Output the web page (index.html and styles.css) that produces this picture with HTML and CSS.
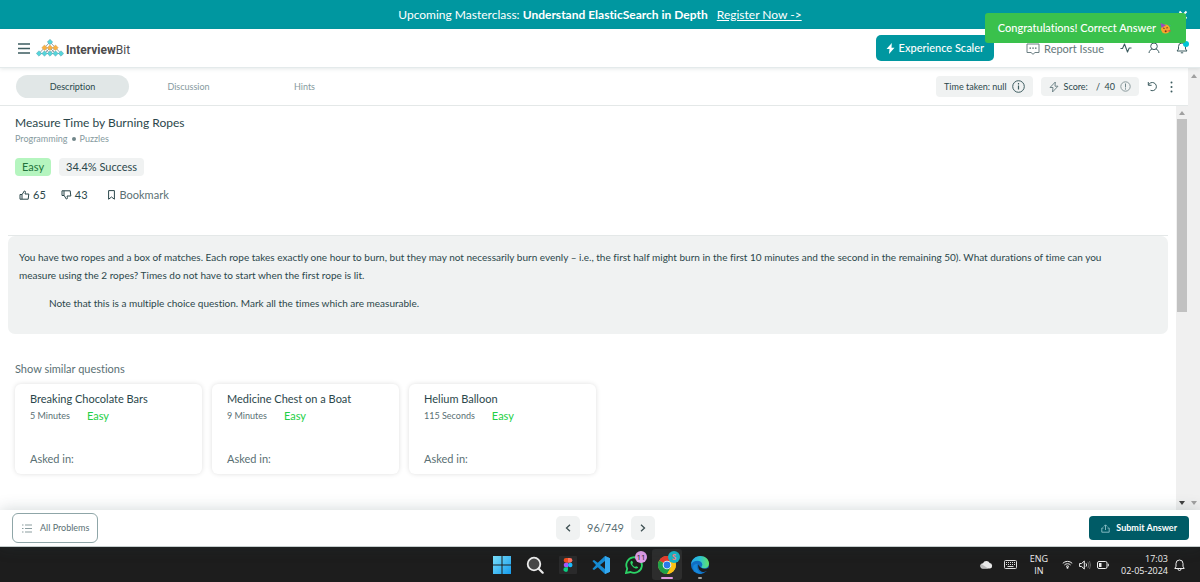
FILE: index.html
```html
<!DOCTYPE html>
<html lang="en">
<head>
<meta charset="utf-8">
<title>Measure Time by Burning Ropes - InterviewBit</title>
<link rel="stylesheet" href="styles.css">
</head>
<body>
<div class="banner">
  <p class="banner-text">Upcoming Masterclass: <strong>Understand ElasticSearch in Depth</strong> <a class="banner-link" href="#">Register Now -&gt;</a></p>
  <button class="banner-close" aria-label="Close banner"><svg width="10" height="10" viewBox="0 0 10 10"><path d="M1.5 1.5l7 7M8.500 1.500l-7 7" stroke="#fff" stroke-width="1.800"/></svg></button>
</div>

<header class="header">
  <button class="icon-button menu" aria-label="Menu"><svg width="12" height="11" viewBox="0 0 12 11"><path d="M0 1h12M0 5.500h12M0 10h12" stroke="#3d5c60" stroke-width="1.300"/></svg></button>
  <a class="logo" href="#">
    <svg width="28" height="18" viewBox="0 0 28 18">
      <path d="M14 3L3 14.500M14 3l11 11.500M8.500 9l5.500 5.500M19.500 9L14 14.500M14 9l-5.500 5.500M14 9l5.500 5.500M8.500 9h11M3 14.500h22" stroke="#7b8a90" stroke-width=".8" fill="none"/>
      <g fill="#55d5db" stroke="#5aa5b0" stroke-width=".5"><path d="M14 .3l2.700 2.700L14 5.700 11.300 3zM3 11.800l2.700 2.700L3 17.200.3 14.500zM8.500 11.800l2.700 2.700-2.700 2.700-2.700-2.700zM14 11.800l2.700 2.700-2.700 2.700-2.700-2.700zM19.500 11.800l2.700 2.700-2.700 2.700-2.700-2.700zM25 11.800l2.700 2.700-2.700 2.700-2.700-2.700z"/></g>
      <path d="M8.500 6l2.700 2.700-2.700 2.700-2.700-2.700zM14 6l2.700 2.700-2.700 2.700-2.700-2.700zM19.500 6l2.700 2.700-2.700 2.700-2.700-2.700z" fill="#fbb040" stroke="#c69c5b" stroke-width=".5"/>
    </svg>
    <span class="logo-name"><b>Interview</b>Bit</span>
  </a>
  <button class="scaler"><svg width="9" height="11" viewBox="0 0 9 11"><path d="M5.800 0L.5 6h3L3 11l5.500-6.300h-3z" fill="#fff"/></svg>Experience Scaler</button>
  <button class="icon-button report"><svg width="14" height="12" viewBox="0 0 14 12"><path d="M1 1h12v8.500H9l-2 1.800-2-1.800H1z" fill="none" stroke="#6c7f83"/><path d="M3.500 5.200h1.500M6.300 5.200h1.500M9 5.200h1.500" stroke="#506669" stroke-width="1.300"/></svg>Report Issue</button>
  <button class="icon-button" aria-label="Activity"><svg width="12" height="12" viewBox="0 0 12 12"><path d="M.5 6.500h2L4.500 2l3 8 1.700-4h2.300" fill="none" stroke="#3d5c60" stroke-width="1.100" stroke-linejoin="round"/></svg></button>
  <button class="icon-button" aria-label="Profile"><svg width="12" height="12" viewBox="0 0 12 12"><circle cx="6" cy="4.300" r="3.300" fill="none" stroke="#3d5c60"/><path d="M1 11c.3-2.400 1.600-3.600 3.400-4M11 11c-.3-2.400-1.600-3.600-3.400-4" fill="none" stroke="#3d5c60"/></svg></button>
  <button class="icon-button bell" aria-label="Notifications"><svg width="12" height="12" viewBox="0 0 12 12"><path d="M1 9h10L9.500 7V4.500a3.500 3.500 0 0 0-7 0V7zM4.800 10.800h2.400" fill="none" stroke="#3d5c60"/></svg><span class="bell-dot"></span></button>
</header>

<div class="toast" role="status">Congratulations! Correct Answer
  <svg width="11" height="11" viewBox="0 0 11 11"><circle cx="5.500" cy="6" r="4.500" fill="#f7a52c"/><path d="M.5 0l5.500 2.200L1.500 5z" fill="#9a4cc0"/><path d="M3 5.500q.8-.8 1.600 0M6.300 5q.8-.8 1.600 0" stroke="#6b3b1d" fill="none"/><circle cx="5.700" cy="8.300" r="1" fill="#7d3620"/><path d="M6.500 8l4-1.200v2z" fill="#e05046"/><path d="M9 1.500l1 1" stroke="#4d8be0"/></svg>
</div>

<div class="workspace">
  <main class="main">
    <div class="toolbar">
      <nav class="tabs">
        <a class="tab tab-active" href="#">Description</a>
        <a class="tab" href="#">Discussion</a>
        <a class="tab" href="#">Hints</a>
      </nav>
      <div class="pill">Time taken: null <svg width="13" height="13" viewBox="0 0 13 13"><circle cx="6.500" cy="6.500" r="5.800" fill="none" stroke="#3d5c60"/><path d="M6.500 5.500v4M6.500 3v1.400" stroke="#3d5c60" stroke-width="1.200"/></svg></div>
      <div class="pill pill-score"><svg width="10" height="12" viewBox="0 0 10 12"><path d="M6.300 1L1 6.500h3L3.500 11 9 5.200H6z" fill="none" stroke="#71868a" stroke-linejoin="round"/></svg>Score:<span class="score-value">/ &nbsp;40</span><svg width="11" height="11" viewBox="0 0 11 11"><circle cx="5.500" cy="5.500" r="4.700" fill="none" stroke="#8b9a9d"/><path d="M5.500 2.500v4M5.500 7.300v1.300" stroke="#71868a"/></svg></div>
      <button class="icon-button" aria-label="Reset"><svg width="11" height="11" viewBox="0 0 11 11"><path d="M1.300 1v3.300h3.300M1.500 4A4.100 4.100 0 1 1 3.500 9.300" fill="none" stroke="#3d5c60"/></svg></button>
      <button class="icon-button more" aria-label="More"><svg width="3" height="12" viewBox="0 0 3 12"><g fill="#3d5c60"><circle cx="1.500" cy="1.500" r="1"/><circle cx="1.500" cy="6" r="1"/><circle cx="1.500" cy="10.500" r="1"/></g></svg></button>
    </div>

    <div class="pane">
      <article class="content">
        <section class="intro">
          <h1 class="title">Measure Time by Burning Ropes</h1>
          <p class="crumbs">Programming <span class="dot"></span> Puzzles</p>
          <div class="chips"><span class="chip chip-easy">Easy</span><span class="chip">34.4% Success</span></div>
          <div class="votes">
            <button class="vote"><svg width="11" height="10" viewBox="0 0 11 10"><path d="M1 4.500h2v4.700H1zM3 4.700L5.300 1c1 0 1.400.6 1.100 1.500L6 4h3.800L9.200 9.200H3" fill="none" stroke="#2b474b" stroke-linejoin="round"/></svg>65</button>
            <button class="vote"><svg width="11" height="10" viewBox="0 0 11 10"><path d="M1 5.500h2V.8H1zM3 5.300L5.300 9c1 0 1.400-.6 1.100-1.500L6 6h3.800L9.200.8H3" fill="none" stroke="#2b474b" stroke-linejoin="round"/></svg>43</button>
            <button class="vote bookmark"><svg width="7" height="10" viewBox="0 0 7 10"><path d="M.6.6h5.800v8.600L3.500 7 .6 9.200z" fill="none" stroke="#2b474b"/></svg>Bookmark</button>
          </div>
        </section>

        <section class="statement">
          <p>You have two ropes and a box of matches. Each rope takes exactly one hour to burn, but they may not necessarily burn evenly – i.e., the first half might burn in the first 10 minutes and the second in the remaining 50). What durations of time can you<br>measure using the 2 ropes? Times do not have to start when the first rope is lit.</p>
          <p class="note">Note that this is a multiple choice question. Mark all the times which are measurable.</p>
        </section>

        <section class="similar">
          <h2 class="similar-title">Show similar questions</h2>
          <div class="cards">
            <a class="card" href="#"><span class="card-title">Breaking Chocolate Bars</span><span class="card-meta">5 Minutes <span class="level">Easy</span></span><span class="asked">Asked in:</span></a>
            <a class="card" href="#"><span class="card-title">Medicine Chest on a Boat</span><span class="card-meta">9 Minutes <span class="level">Easy</span></span><span class="asked">Asked in:</span></a>
            <a class="card" href="#"><span class="card-title">Helium Balloon</span><span class="card-meta">115 Seconds <span class="level">Easy</span></span><span class="asked">Asked in:</span></a>
          </div>
        </section>
      </article>
      <div class="scrollbar"><span class="arrow arrow-up"></span><span class="thumb"></span><span class="arrow arrow-down arrow-dark"></span></div>
    </div>
  </main>
  <div class="scrollbar scrollbar-outer"><span class="arrow arrow-up"></span><span class="arrow arrow-down"></span></div>
</div>

<footer class="footer">
  <button class="all"><svg width="10" height="9" viewBox="0 0 10 9"><path d="M0 1h1.500M3 1h7M0 4.500h1.500M3 4.500h7M0 8h1.500M3 8h7" stroke="#8b9da0" stroke-width="1.200"/></svg>All Problems</button>
  <div class="pager">
    <button class="step" aria-label="Previous"><svg width="6" height="8" viewBox="0 0 6 8"><path d="M5 .8L1.500 4 5 7.200" fill="none" stroke="#3d4f52" stroke-width="1.300"/></svg></button>
    <span>96/749</span>
    <button class="step" aria-label="Next"><svg width="6" height="8" viewBox="0 0 6 8"><path d="M1 .8L4.500 4 1 7.200" fill="none" stroke="#3d4f52" stroke-width="1.300"/></svg></button>
  </div>
  <button class="submit"><svg width="9" height="9" viewBox="0 0 9 9"><path d="M2.500 4H.8v4.200h7.400V4H6.500M4.500 6V1M2.800 2.500L4.500.8l1.700 1.700" fill="none" stroke="#8fc3c9" stroke-width=".9"/></svg>Submit Answer</button>
</footer>

<div class="taskbar">
  <div class="apps">
    <button class="app" aria-label="Start"><svg width="18" height="18" viewBox="0 0 18 18"><defs><linearGradient id="win" x2="1" y2="1"><stop stop-color="#7be0fb"/><stop offset="1" stop-color="#159bed"/></linearGradient></defs><path d="M0 0h8.500v8.500H0zM9.500 0H18v8.500H9.500zM0 9.500h8.500V18H0zM9.500 9.500H18V18H9.500z" fill="url(#win)"/></svg></button>
    <button class="app" aria-label="Search"><svg width="18" height="18" viewBox="0 0 18 18"><circle cx="8" cy="8" r="6.300" fill="#474747" stroke="#ececec" stroke-width="1.800"/><path d="M12.700 12.700l4 4" stroke="#ececec" stroke-width="2.200" stroke-linecap="round"/></svg></button>
    <button class="app" aria-label="Figma"><svg width="18" height="18" viewBox="0 0 18 18"><rect width="18" height="18" rx="1" fill="#2a2a2b"/><path d="M9 2H7a2.300 2.300 0 0 0 0 4.700h2z" fill="#f24e1e"/><path d="M9 2h2a2.300 2.300 0 0 1 0 4.700H9z" fill="#ff7262"/><path d="M9 6.700H7a2.300 2.300 0 0 0 0 4.600h2z" fill="#a259ff"/><circle cx="11.200" cy="9" r="2.300" fill="#1abcfe"/><path d="M9 11.300H7A2.300 2.300 0 1 0 9 13.700z" fill="#0acf83"/></svg></button>
    <button class="app" aria-label="Visual Studio Code"><svg width="18" height="18" viewBox="0 0 18 18"><path d="M13 0L5.800 6.800 2 4 .4 4.900 4 9 .4 13.100 2 14l3.800-2.800L13 18l5-2.200V2.200zM13 5v8L8 9z" fill="#168bd2" fill-rule="evenodd"/><path d="M13 0l5 2.200v13.600L13 18z" fill="#35a8ef"/></svg></button>
    <button class="app" aria-label="WhatsApp"><svg width="18" height="18" viewBox="0 0 18 18"><path d="M1 17l1.200-4.300A7.800 7.800 0 1 1 5.500 16z" fill="none" stroke="#2bd366" stroke-width="1.800"/><path d="M6.500 4.800c-1.800.8-1.200 3.500 1 5.700s4.700 2.900 5.700 1.100c.2-.6-1.800-1.700-2.300-1.400l-.8.9C8.700 10.500 7.600 9.300 7.200 8l.8-.9c.2-.6-.8-2.600-1.500-2.300z" fill="#2bd366"/></svg><span class="badge badge-pink">11</span></button>
    <button class="app app-active" aria-label="Chrome"><svg width="18" height="18" viewBox="0 0 18 18"><circle cx="9" cy="9" r="9" fill="#fbc116"/><path d="M9 9L1.200 4.500A9 9 0 0 1 16.800 4.500z" fill="#e33b2e"/><path d="M9 9L1.200 4.500A9 9 0 0 0 9 18l4-6.700z" fill="#20a04b"/><path d="M9 5h7.900A9 9 0 0 1 9 18l4-7z" fill="#fbc116"/><circle cx="9" cy="9" r="4.300" fill="#fff"/><circle cx="9" cy="9" r="3.400" fill="#2c7be9"/></svg><span class="badge badge-teal">S</span></button>
    <button class="app app-running" aria-label="Edge"><svg width="18" height="18" viewBox="0 0 18 18"><defs><linearGradient id="edge" x2="1"><stop stop-color="#29a9ed"/><stop offset=".5" stop-color="#2cc5d3"/><stop offset="1" stop-color="#65e267"/></linearGradient></defs><circle cx="9" cy="9" r="9" fill="#116fc4"/><path d="M0 8.500C.5 3.500 4.500 0 9.300 0 14.500 0 18 3.500 18 7.500c0 3-2.200 4.700-4.600 4.700-1.800 0-3-.6-3-1.300 0-.5.900-.9.900-2.400C11.300 6.300 9 4.800 6.500 4.800 3.500 4.800 1 6.300 0 8.500z" fill="url(#edge)"/><path d="M7.500 8.500c-1 3.500 1 7 4.500 7.500 2 .2 3.500-.5 4.800-1.700L18 11.500l-1.800.8c-3 1.200-7.200.5-8.700-3.800z" fill="#1d1d1d"/><path d="M6.500 8c-1.800 3.500.5 8.600 5 9.600C7 18.500 2.500 16 2 11.500 2 9 4 7.500 6.500 8z" fill="#1687d9"/></svg></button>
  </div>
  <div class="tray">
    <svg width="13" height="9" viewBox="0 0 13 9"><path d="M3 8.500a2.600 2.600 0 0 1 0-5.200A3.700 3.700 0 0 1 9.700 3 2.800 2.800 0 0 1 10 8.500z" fill="#e9e9e9"/><path d="M1.300 4l7 4.500H3A2.600 2.600 0 0 1 1.300 4z" fill="#bdbdbd"/></svg>
    <svg class="keyboard" width="13" height="9" viewBox="0 0 13 9"><rect x=".5" y=".5" width="12" height="8" rx="1" fill="none" stroke="#ddd"/><path d="M2 2.500h9M2 4.500h9" stroke="#ddd" stroke-dasharray="1 1"/><path d="M3.500 6.500h6" stroke="#ddd"/></svg>
    <span class="language">ENG<br>IN</span>
    <svg width="11" height="9" viewBox="0 0 11 9"><path d="M.8 3.300a6.700 6.700 0 0 1 9.400 0M2.400 5a4.400 4.400 0 0 1 6.200 0M4 6.500a2.200 2.200 0 0 1 3 0" fill="none" stroke="#eee"/><circle cx="5.500" cy="7.800" r="1" fill="#eee"/></svg>
    <svg width="12" height="10" viewBox="0 0 12 10"><path d="M.6 3.500h2L5.300 1v8L2.600 6.500h-2z" fill="none" stroke="#eee"/><path d="M7 3.300q1.200 1.700 0 3.400" fill="none" stroke="#eee"/><path d="M8.800 1.800q2.300 3.200 0 6.400M10.500 1q2 4 0 8" fill="none" stroke="#777" stroke-width=".8"/></svg>
    <svg width="12" height="8" viewBox="0 0 12 8"><rect x=".5" y=".5" width="9.500" height="7" rx="1.500" fill="none" stroke="#eee"/><path d="M2 2h2.500v4H2zM10.800 2.800h1v2.400h-1z" fill="#eee"/></svg>
    <time class="clock" datetime="2024-05-02T17:03">17:03<br>02-05-2024</time>
    <svg width="11" height="12" viewBox="0 0 11 12"><path d="M.8 9.500h9.400L9 7.300V4.500a3.500 3.500 0 0 0-7 0v2.800zM4 10a1.500 1.500 0 0 0 3 0" fill="none" stroke="#eee" stroke-linejoin="round"/></svg>
  </div>
</div>
</body>
</html>
```
FILE: styles.css
```css
* { box-sizing: border-box; }
body, h1, h2, p { margin: 0; font-weight: 400; }
body {
  display: flex;
  flex-direction: column;
  height: 100vh;
  overflow: hidden;
  background: #fff;
  color: #2b474b;
  font: 11px/16px Lato, "Open Sans", sans-serif;
  font-variant-ligatures: none;
}
a { color: inherit; text-decoration: none; }
button {
  display: flex;
  align-items: center;
  justify-content: center;
  margin: 0;
  padding: 0;
  border: 0;
  background: none;
  color: inherit;
  font: inherit;
}
svg { display: block; flex: none; }

.banner {
  display: flex;
  align-items: center;
  height: 29px;
  padding-right: 12px;
  background: #0097a0;
  color: #fff;
  font-size: 12px;
}
.banner-text { flex: 1; padding-left: 22px; text-align: center; }
.banner-link { margin-left: 6px; text-decoration: underline; }

.header {
  position: relative;
  z-index: 2;
  display: flex;
  align-items: center;
  gap: 16px;
  height: 39px;
  padding: 0 12px 0 18px;
  border-bottom: 1px solid #e4eaeb;
  box-shadow: 0 1px 4px rgba(40, 70, 75, .12);
}
.logo { display: flex; align-items: center; gap: 2px; margin: 0 auto 0 -10px; }
.logo-name { padding-top: 4px; color: #4b4b4d; font: 12px/16px Roboto, sans-serif; }
.scaler {
  gap: 4px;
  height: 26px;
  margin-right: 16px;
  padding: 0 10px;
  border-radius: 5px;
  background: #0097a0;
  color: #fff;
  font-weight: 500;
}
.report { gap: 4px; padding-top: 1px; color: #65787b; }
.bell { position: relative; }
.bell-dot {
  position: absolute;
  top: -1px;
  right: -1px;
  width: 6px;
  height: 6px;
  border-radius: 50%;
  background: #00c5d7;
}
.toast {
  position: absolute;
  z-index: 3;
  top: 13px;
  right: 14px;
  display: flex;
  align-items: center;
  gap: 4px;
  height: 30px;
  padding: 0 15px 0 13px;
  border-radius: 3px;
  background: #3ac14c;
  color: #fff;
  font-weight: 500;
}

.workspace { display: flex; flex: 1; min-height: 0; }
.main { display: flex; flex: 1; flex-direction: column; min-width: 0; }
.toolbar {
  display: flex;
  align-items: center;
  gap: 8px;
  height: 38px;
  padding: 0 11px 0 16px;
  border-bottom: 1px solid #e4e8e8;
}
.tabs { display: flex; gap: 3px; margin-right: auto; }
.tab {
  width: 113px;
  border-radius: 12px;
  color: #869a9e;
  font-size: 9px;
  line-height: 23px;
  text-align: center;
}
.tab-active { background: #e1e7e7; color: #2b474b; }
.pill {
  display: flex;
  align-items: center;
  gap: 5px;
  height: 21px;
  padding: 0 8px;
  border-radius: 4px;
  background: #f0f2f2;
  font-size: 9px;
}
.pill-score { height: 19px; }
.score-value { margin-left: 3px; }
.more { width: 11px; }

.pane { display: flex; flex: 1; min-height: 0; }
.content { flex: 1; min-width: 0; padding: 8px 8px 0; overflow: hidden; }
.intro { padding: 0 7px 32px; border-bottom: 1px solid #e4e8e8; }
.title { font-size: 12px; line-height: 18px; }
.crumbs { display: flex; align-items: center; gap: 4px; color: #869a9e; font-size: 9px; line-height: 14px; }
.dot { width: 4px; height: 4px; border-radius: 50%; background: #71868a; }
.chips { display: flex; gap: 8px; margin-top: 12px; }
.chip { padding: 0 7px; border-radius: 4px; background: #f0f2f2; line-height: 18px; }
.chip-easy { background: #b5f5bf; color: #22733a; }
.votes { display: flex; gap: 15px; margin-top: 11px; padding-left: 4px; }
.vote { gap: 3px; }
.bookmark { gap: 5px; margin-left: 5px; color: #5a7074; }
.statement {
  padding: 12px 11px 22px;
  border-radius: 7px;
  background: #f0f2f2;
  font-size: 10px;
  line-height: 18px;
}
.note { margin: 10px 0 0 30px; }
.similar { padding: 27px 7px 0; }
.similar-title { color: #5a7074; font-size: 11px; line-height: 16px; }
.cards { display: flex; gap: 10px; margin-top: 7px; }
.card {
  display: flex;
  flex-direction: column;
  width: 187px;
  height: 90px;
  padding: 7px 15px;
  border-radius: 6px;
  box-shadow: 0 0 5px rgba(0, 0, 0, .13);
}
.card-meta { display: flex; gap: 17px; color: #5a7074; font-size: 9px; line-height: 17px; }
.level { color: #23cf45; font-size: 11px; }
.asked { margin-top: auto; color: #5a7074; }

.scrollbar {
  display: flex;
  flex-direction: column;
  align-items: center;
  width: 12px;
  padding: 5px 0;
  background: #f0f0f0;
}
.scrollbar-outer { padding-top: 6px; }
.thumb { width: 10px; height: 193px; margin-top: 4px; background: #c1c1c1; }
.arrow { border: 3px solid transparent; border-top-width: 0; border-bottom: 4px solid #a0a0a0; }
.arrow-down { margin-top: auto; border-top: 4px solid #a0a0a0; border-bottom-width: 0; }
.arrow-dark { border-top-color: #404040; }

.footer {
  position: relative;
  z-index: 1;
  display: grid;
  grid-template-columns: 1fr auto 1fr;
  align-items: center;
  height: 37px;
  padding: 0 11px 0 12px;
  border-bottom: 1px solid #c5cdcd;
  background: #fff;
  box-shadow: 0 0 16px rgba(40, 70, 75, .22);
}
.all {
  justify-self: start;
  gap: 8px;
  height: 30px;
  padding: 0 8px 0 9px;
  border: 1px solid #8fa6a8;
  border-radius: 6px;
  color: #5a7074;
  font-size: 9px;
}
.pager { display: flex; align-items: center; gap: 7px; margin-left: 10px; color: #5a7074; }
.step { width: 24px; height: 24px; border-radius: 5px; background: #f0f2f2; }
.submit {
  justify-self: end;
  gap: 6px;
  height: 24px;
  padding: 0 12px;
  border-radius: 4px;
  background: #005b66;
  color: #fff;
  font-size: 9px;
  font-weight: 700;
}

.taskbar {
  display: grid;
  grid-template-columns: 1fr auto 1fr;
  align-items: center;
  height: 35px;
  padding: 0 15px 0 17px;
  background: #1d1d1d;
  color: #f0f0f0;
}
.apps { display: flex; grid-column: 2; gap: 3px; }
.app { position: relative; width: 30px; height: 31px; border-radius: 3px; }
.app-active { background: #2d2d2d; }
.app-active::after, .app-running::after {
  content: "";
  position: absolute;
  bottom: 1px;
  left: 9px;
  width: 12px;
  height: 2px;
  border-radius: 1px;
  background: #e29be0;
}
.app-running::after { left: 13px; width: 4px; background: #a0a0a0; }
.badge {
  position: absolute;
  top: 2px;
  right: 2px;
  width: 12px;
  height: 12px;
  border-radius: 50%;
  font: 8px/12px "Open Sans", sans-serif;
  text-align: center;
}
.badge-pink { background: #df9be8; color: #222; }
.badge-teal { background: #17b4c8; color: #ef7f86; font-weight: 700; }
.tray {
  display: flex;
  align-items: center;
  justify-self: end;
  gap: 6px;
  font: 9px/12px "Open Sans", sans-serif;
}
.keyboard { margin: 0 7px 0 5px; }
.language { margin-right: 8px; text-align: center; }
.clock { margin-left: 6px; text-align: right; }
```
